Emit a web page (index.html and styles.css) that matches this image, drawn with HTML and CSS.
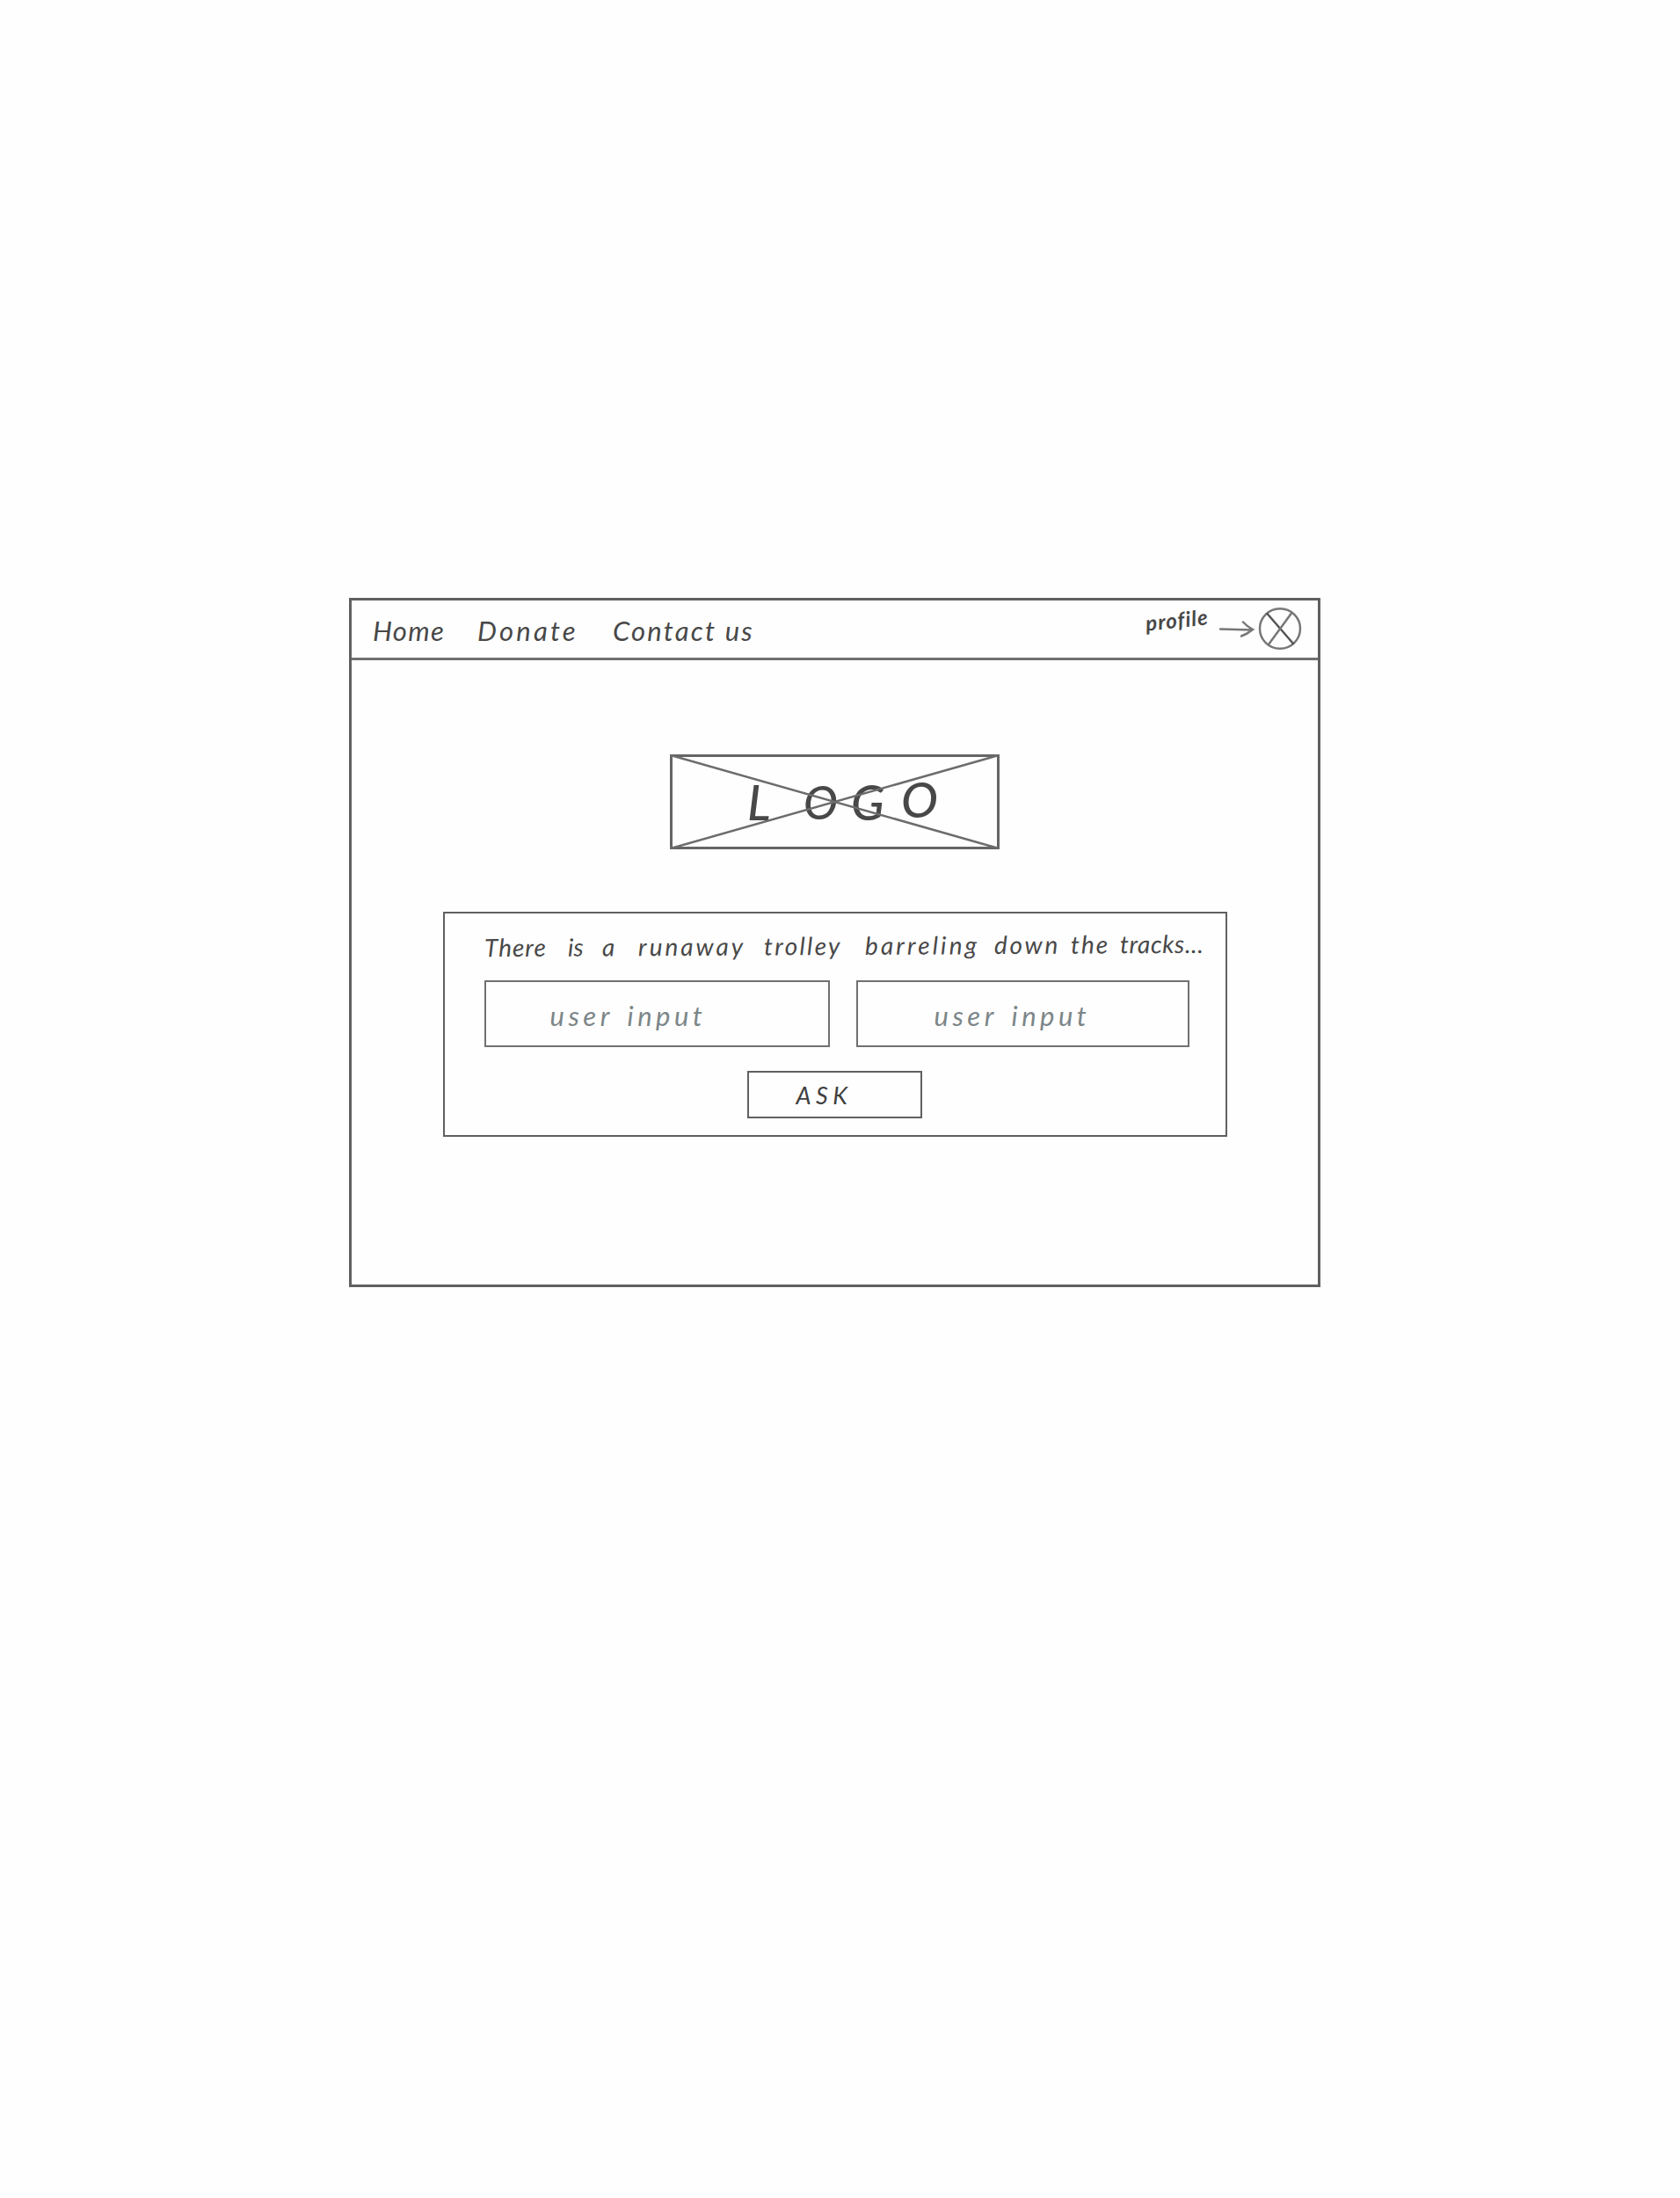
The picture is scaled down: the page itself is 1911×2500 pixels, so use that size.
FILE: index.html
```html
<!DOCTYPE html>
<html lang="en">
<head>
<meta charset="utf-8">
<title>Wireframe</title>
<link rel="stylesheet" href="styles.css">
</head>
<body>
<div class="frame">
  <header class="bar">
    <nav class="nav">
      <a class="home">Home</a>
      <a class="donate">Donate</a>
      <a class="contact">Contact us</a>
    </nav>
    <div class="profile">
      <span class="profile-label">profile</span>
      <svg class="arrow" width="40" height="20" viewBox="0 0 40 20"><path d="M1 9.500 L37 10.500 M27 1.500 Q32 7 38 10 Q32 15 25 17.500"/></svg>
      <svg class="avatar" width="50" height="50" viewBox="0 0 50 50"><ellipse cx="25" cy="25" rx="23" ry="22.8"/><path class="dark" d="M10.500 8 L40 42"/><path d="M38 7.500 L12 43"/></svg>
    </div>
  </header>
  <main class="main">
    <div class="logo">
      <svg class="cross" width="375" height="108" viewBox="0 0 375 108"><path d="M1 1 L374 107 M374 1 L1 107"/></svg>
      <span>L</span><span class="low">O</span><span>G</span><span class="high">O</span>
    </div>
    <section class="card">
      <p class="prompt"><span class="w1">There</span> <span class="w2">is</span> <span class="w3">a</span> <span class="w4">runaway</span> <span class="w5">trolley</span> <span class="w6">barreling</span> <span class="w7">down</span> <span class="w8">the</span> <span class="w9">tracks...</span></p>
      <div class="fields">
        <div class="field first"><span>user</span> <span>input</span></div>
        <div class="field second"><span>user</span> <span>input</span></div>
      </div>
      <button class="ask">ASK</button>
    </section>
  </main>
</div>
</body>
</html>
```

FILE: styles.css
```css
* { box-sizing: border-box; }
body {
  margin: 0;
  min-height: 2500px;
  padding: 680px 0 0 397px;
  background: #fefefe;
  color: #484848;
  font-family: Lato, "Liberation Sans", sans-serif;
  font-style: italic;
  line-height: 1.2;
}
svg { fill: none; stroke: #777; stroke-width: 2.5; stroke-linecap: round; }
.frame { width: 1105px; height: 784px; border: 3px solid #606060; }
.bar {
  display: flex;
  justify-content: space-between;
  height: 68px;
  border-bottom: 3px solid #707070;
}
.nav { display: grid; grid-template-columns: 119px 154px 170px; padding: 16px 0 0 24px; font-size: 31px; white-space: nowrap; }
.home { letter-spacing: 1.3px; }
.donate { letter-spacing: 3.2px; }
.contact { letter-spacing: 2.2px; }
.profile { display: flex; align-items: flex-start; padding: 7px 18px 0 0; }
.profile-label { font-size: 24px; font-weight: 700; letter-spacing: 1px; margin: 1px 12px 0 0; transform: rotate(-6deg); }
.arrow { margin: 16px 4px 0 0; }
.dark { stroke: #555; }
.main { display: flex; flex-direction: column; align-items: center; }
.logo {
  position: relative;
  display: grid;
  grid-template-columns: 64px 54px 57px 50px;
  width: 375px;
  height: 108px;
  margin-top: 107px;
  padding: 17px 0 0 85px;
  border: 3px solid #656565;
  font-size: 56px;
  font-weight: 500;
}
.cross { position: absolute; left: -3px; top: -3px; stroke: #6c6c6c; }
.low { margin-top: 3px; font-size: 52px; }
.high { margin-top: -3px; }
.card {
  display: flex;
  flex-direction: column;
  align-items: center;
  width: 892px;
  height: 256px;
  margin: 71px 0 0 0;
  border: 2px solid #606060;
}
.prompt {
  display: grid;
  grid-template-columns: 95px 39px 41px 143px 115px 147px 87px 56px 100px;
  align-self: flex-start;
  margin: 20px 0 0 45px;
  font-size: 28px;
  line-height: 33px;
  white-space: nowrap;
  transform: rotate(-.3deg);
}
.w1 { letter-spacing: 1px; }
.w4 { letter-spacing: 3px; }
.w5 { letter-spacing: 2.3px; }
.w6 { letter-spacing: 3.1px; }
.w7 { letter-spacing: 2.7px; }
.w8 { letter-spacing: 2px; }
.w9 { letter-spacing: .6px; }
.fields { display: flex; align-self: flex-start; gap: 30px; margin: 23px 0 0 45px; }
.field {
  display: grid;
  grid-template-columns: 88px 100px;
  height: 76px;
  padding-top: 20px;
  border: 2px solid #707070;
  color: #7c8688;
  font-size: 31px;
  letter-spacing: 4.5px;
}
.first { width: 393px; padding-left: 73px; }
.second { width: 379px; padding-left: 87px; }
.ask {
  width: 199px;
  height: 54px;
  margin-top: 27px;
  padding: 0 24px 0 0;
  border: 2px solid #606060;
  background: none;
  color: #404040;
  font: italic 27px Lato, sans-serif;
  letter-spacing: 5.5px;
}
```
